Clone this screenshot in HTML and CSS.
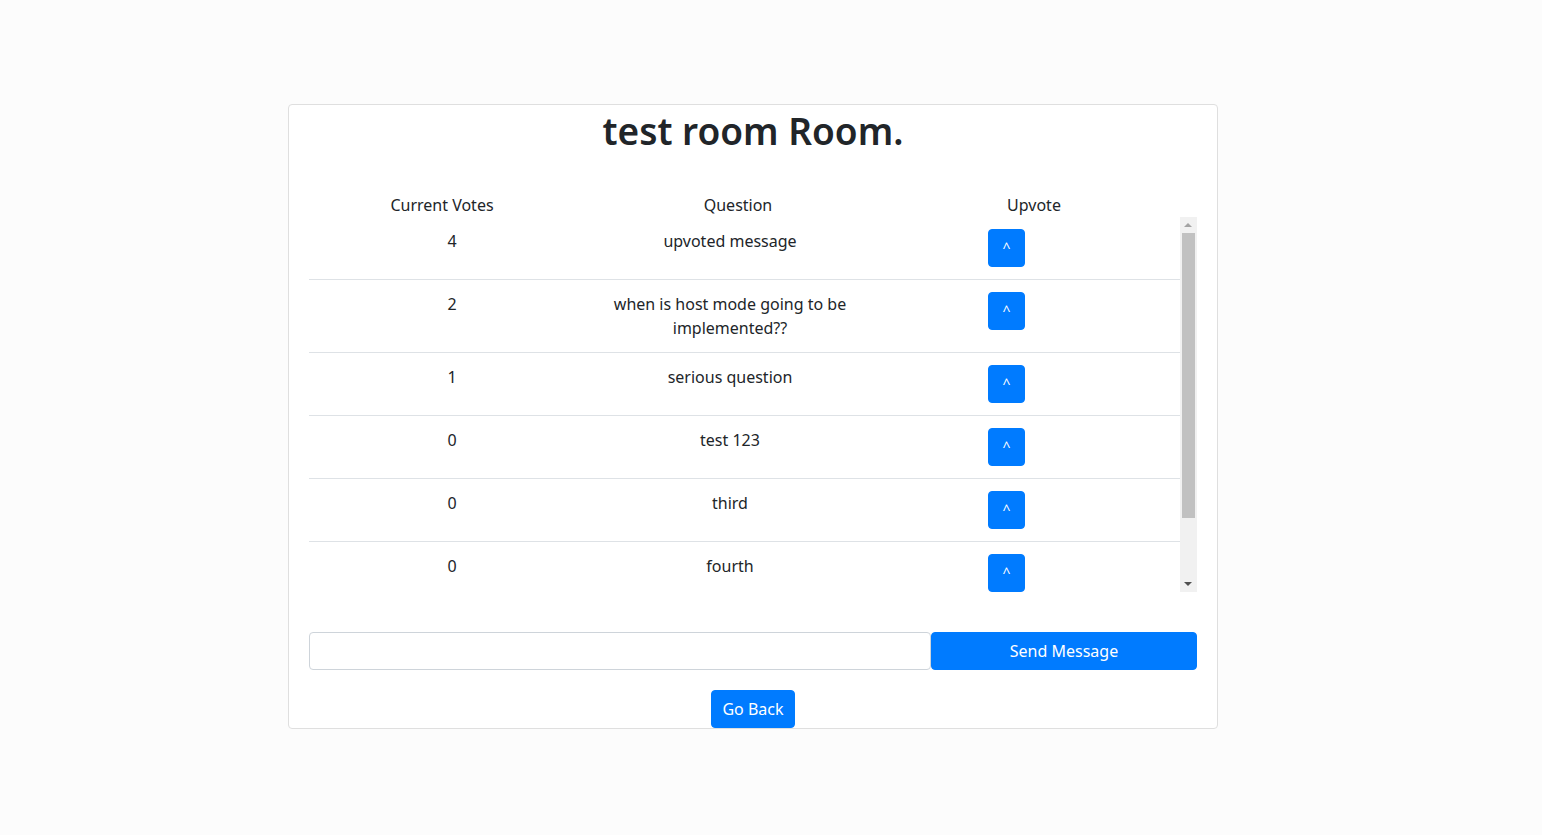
FILE: index.html
```html
<!DOCTYPE html>
<html>
<head>
<meta charset="utf-8">
<link rel="stylesheet" href="styles.css">
</head>
<body>
<div class="card">
  <h1 class="title">test room Room.</h1>
  <div class="thead">
    <div class="th">Current Votes</div>
    <div class="th">Question</div>
    <div class="th">Upvote</div>
  </div>
  <div class="tbody-wrap">
    <div class="tbody">
      <div class="row">
        <div class="cell votes">4</div>
        <div class="cell question">upvoted message</div>
        <div class="cell action"><button class="btn up">^</button></div>
      </div>
      <div class="row">
        <div class="cell votes">2</div>
        <div class="cell question">when is host mode going to be implemented??</div>
        <div class="cell action"><button class="btn up">^</button></div>
      </div>
      <div class="row">
        <div class="cell votes">1</div>
        <div class="cell question">serious question</div>
        <div class="cell action"><button class="btn up">^</button></div>
      </div>
      <div class="row">
        <div class="cell votes">0</div>
        <div class="cell question">test 123</div>
        <div class="cell action"><button class="btn up">^</button></div>
      </div>
      <div class="row">
        <div class="cell votes">0</div>
        <div class="cell question">third</div>
        <div class="cell action"><button class="btn up">^</button></div>
      </div>
      <div class="row">
        <div class="cell votes">0</div>
        <div class="cell question">fourth</div>
        <div class="cell action"><button class="btn up">^</button></div>
      </div>
    </div>
    <div class="scrollbar">
      <div class="sb-arrow sb-up"></div>
      <div class="sb-track"><div class="sb-thumb"></div></div>
      <div class="sb-arrow sb-down"></div>
    </div>
  </div>
  <div class="send">
    <input class="msg-input" type="text">
    <button class="btn send-btn">Send Message</button>
  </div>
  <div class="back">
    <button class="btn back-btn">Go Back</button>
  </div>
</div>
</body>
</html>
```
FILE: styles.css
```css
html, body {
  margin: 0;
  padding: 0;
}
body {
  background: #fcfcfc;
  font-family: "Noto Sans", "Open Sans", sans-serif;
  font-size: 16px;
  line-height: 24px;
  color: #212529;
  padding-top: 104px;
}
.card {
  margin-left: 288px;
  width: 930px;
  box-sizing: border-box;
  background: #fff;
  border: 1px solid #dfdfdf;
  border-radius: 4px;
  padding: 0 20px;
}
.title {
  margin: 0;
  text-align: center;
  font-size: 37px;
  line-height: 48px;
  font-weight: 600;
  padding-top: 2px;
  height: 74px;
}
.thead {
  display: grid;
  grid-template-columns: 266px 326px 266px;
  padding-top: 12px;
}
.th {
  text-align: center;
}
.tbody-wrap {
  display: flex;
  height: 375px;
}
.tbody {
  flex: 1;
  overflow: hidden;
}
.row {
  display: grid;
  grid-template-columns: 286px 270px 1fr;
  border-bottom: 1px solid #dee2e6;
}
.cell {
  padding: 12px;
}
.votes, .question {
  text-align: center;
}
.question {
  padding: 12px 8px;
}
.action {
  padding-left: 123px;
}
.btn {
  font-family: inherit;
  font-size: 16px;
  line-height: 24px;
  color: #fff;
  background: #007bff;
  border: 1px solid #007bff;
  border-radius: 4px;
  cursor: pointer;
  padding: 6px 12px;
}
.up {
  width: 37px;
  height: 38px;
  padding: 0;
  display: block;
  font-size: 14px;
}
.scrollbar {
  width: 17px;
  background: #f1f1f1;
  display: flex;
  flex-direction: column;
}
.sb-arrow {
  height: 16px;
  position: relative;
}
.sb-up::after, .sb-down::after {
  content: "";
  position: absolute;
  left: 4px;
  width: 0;
  height: 0;
  border-left: 4px solid transparent;
  border-right: 4px solid transparent;
}
.sb-up::after {
  top: 6px;
  border-bottom: 4px solid #a3a3a3;
}
.sb-down::after {
  top: 6px;
  border-top: 4px solid #505050;
}
.sb-track {
  flex: 1;
  padding: 0 2px;
}
.sb-thumb {
  height: 285px;
  background: #c1c1c1;
}
.send {
  display: flex;
  margin-top: 40px;
}
.msg-input {
  width: 622px;
  height: 38px;
  box-sizing: border-box;
  border: 1px solid #ced4da;
  border-radius: 4px;
  padding: 6px 12px;
  font-family: inherit;
  font-size: 16px;
  margin: 0;
}
.send-btn {
  flex: 1;
  height: 38px;
}
.back {
  display: flex;
  justify-content: center;
  margin-top: 20px;
}
.back-btn {
  height: 38px;
  display: block;
  padding: 6px 10px;
}
```
